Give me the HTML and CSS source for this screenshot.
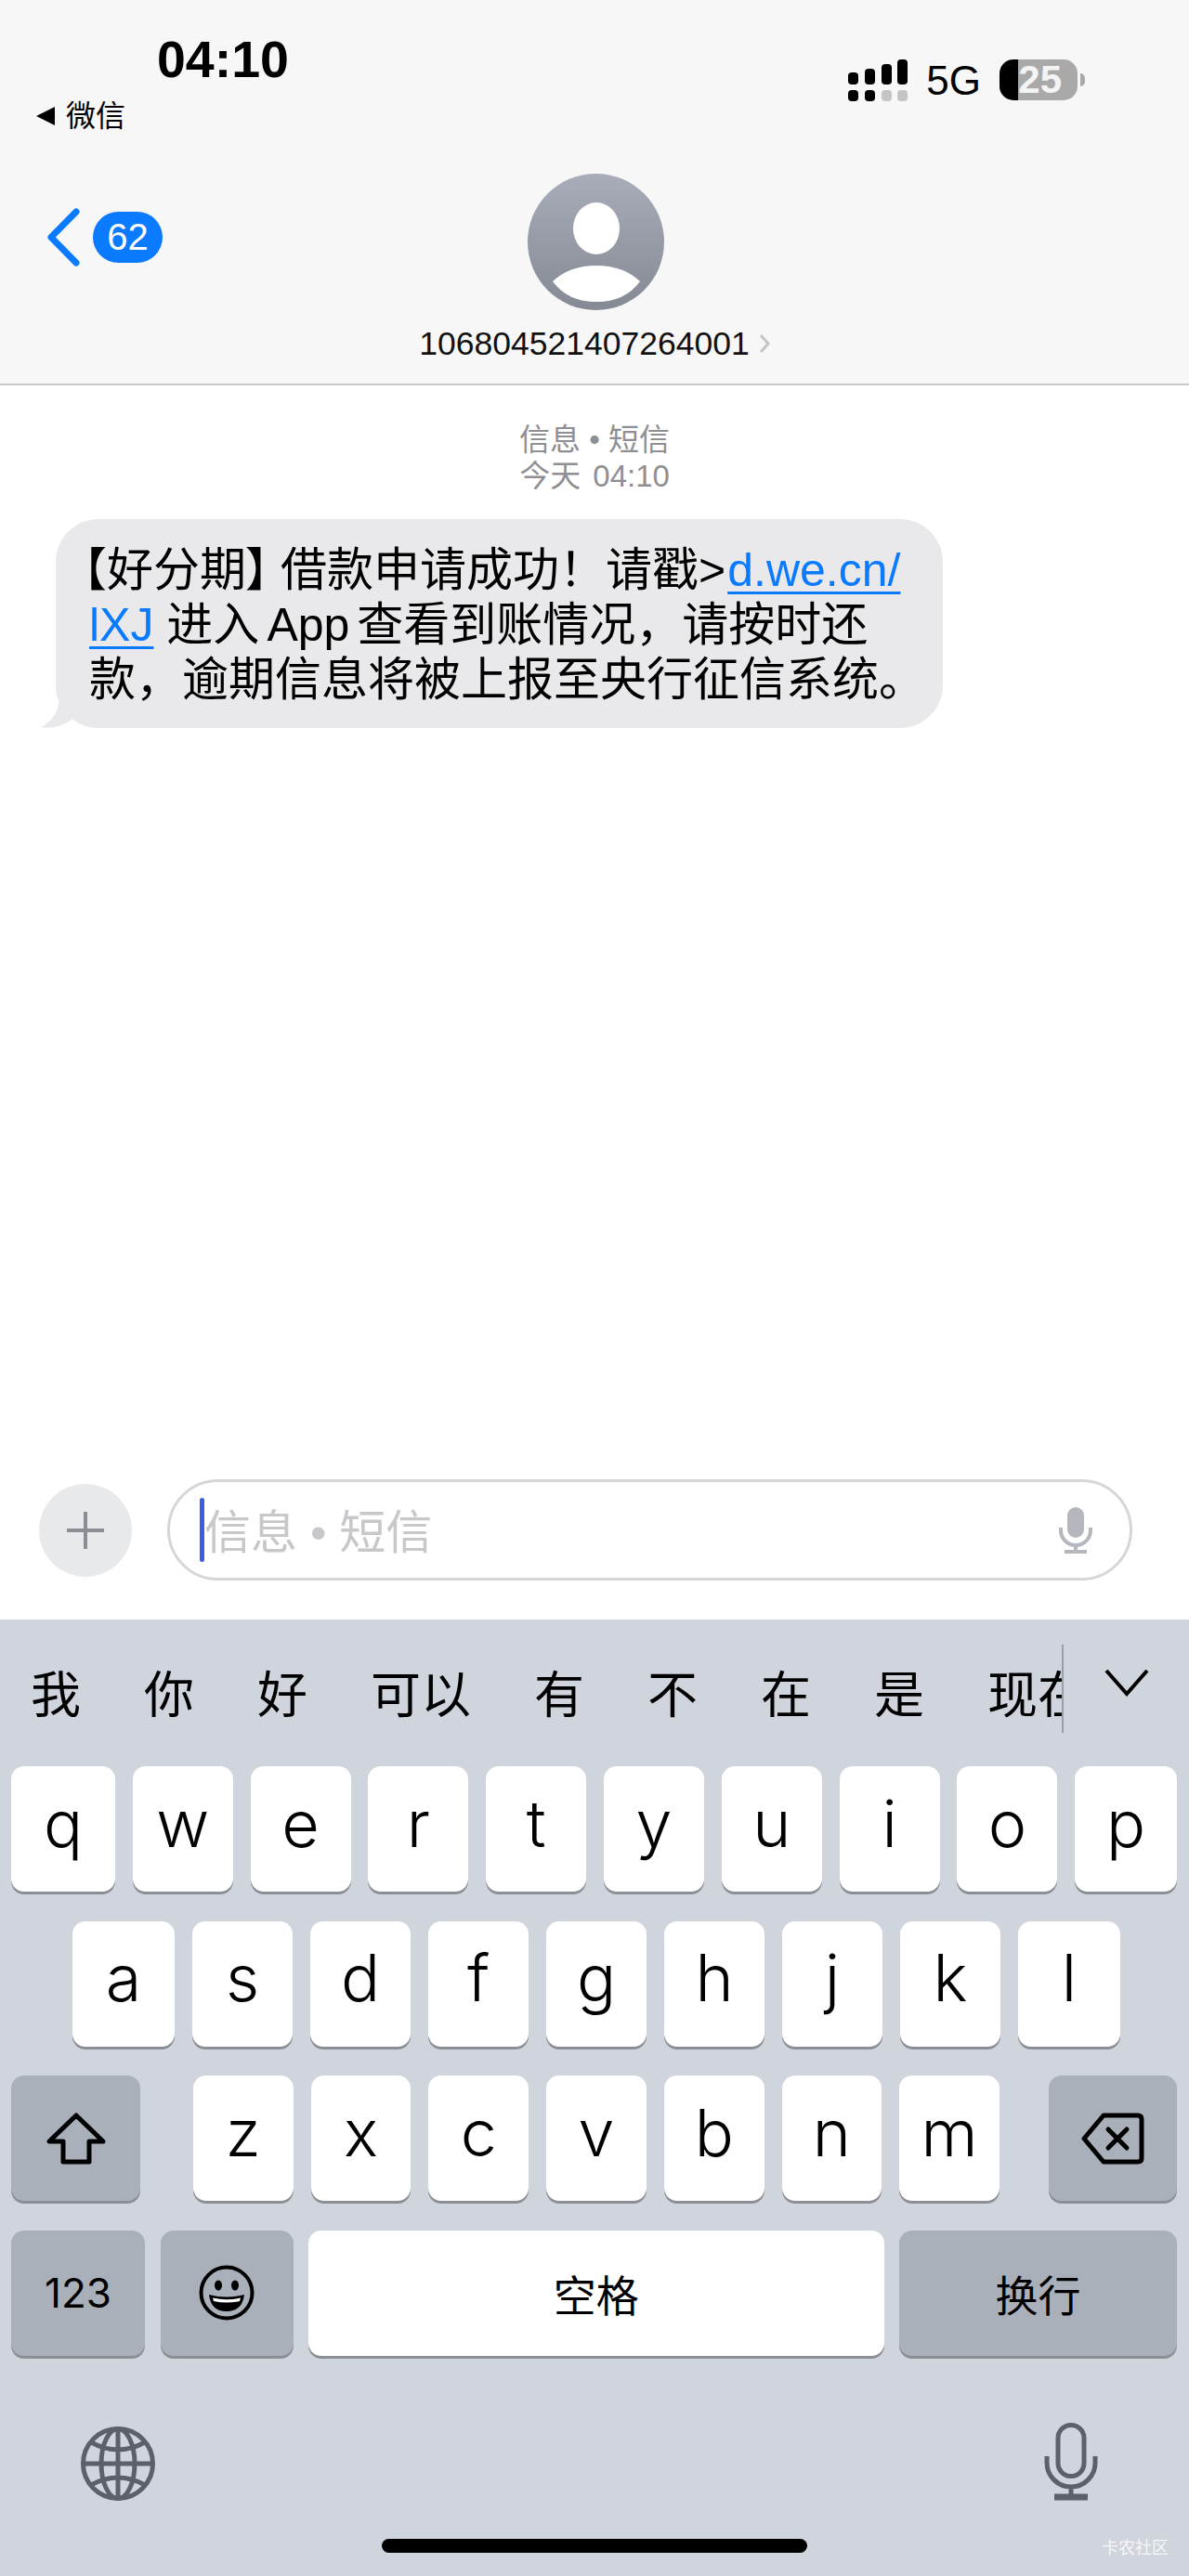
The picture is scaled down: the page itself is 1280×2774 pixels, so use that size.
FILE: index.html
```html
<!DOCTYPE html>
<html lang="zh-CN">
<head>
<meta charset="utf-8">
<title>信息</title>
<link rel="stylesheet" href="styles.css">
</head>
<body>
<div class="screen">
  <header class="header">
    <div class="status">
      <div class="status-left">
        <div class="time">04:10</div>
        <div class="return-app">
          <svg class="return-arrow" viewBox="0 0 21 20"><polygon points="21,0 21,20 1,10"/></svg>
          <span>微信</span>
        </div>
      </div>
      <div class="status-right">
        <svg class="signal" viewBox="0 0 64 45">
          <rect x="0" y="14" width="11" height="13" rx="4"/>
          <rect x="18" y="10" width="11" height="17" rx="4"/>
          <rect x="36" y="5" width="11" height="22" rx="4"/>
          <rect x="53" y="0" width="11" height="27" rx="4"/>
          <rect x="0" y="33" width="11" height="12" rx="4"/>
          <rect x="18" y="33" width="11" height="12" rx="4"/>
          <rect class="signal-off" x="36" y="33" width="11" height="12" rx="4"/>
          <rect class="signal-off" x="53" y="33" width="11" height="12" rx="4"/>
        </svg>
        <span class="network">5G</span>
        <div class="battery"><span>25</span></div>
      </div>
    </div>
    <nav class="nav">
      <div class="back">
        <svg class="back-chevron" viewBox="0 0 36 63"><path d="M32 4 L5 31.5 L32 59"/></svg>
        <span class="badge">62</span>
      </div>
      <div class="contact">
        <svg class="avatar" viewBox="0 0 147 147">
          <defs>
            <linearGradient id="avatarFill" x1="0" y1="0" x2="0" y2="1">
              <stop offset="0" stop-color="#a9adb9"/>
              <stop offset="1" stop-color="#858993"/>
            </linearGradient>
          </defs>
          <circle cx="73.5" cy="73.5" r="73.5" fill="url(#avatarFill)"/>
          <ellipse cx="74" cy="59" rx="25" ry="28" fill="#fff"/>
          <path d="M27 116 Q45 99 74 99 Q103 99 121 116 Q105 138 74 138 Q43 138 27 116 Z" fill="#fff"/>
        </svg>
        <div class="contact-name">
          <span>106804521407264001</span>
          <svg class="name-chevron" viewBox="0 0 12 20"><path d="M2 1 L10 10 L2 19"/></svg>
        </div>
      </div>
      <div></div>
    </nav>
  </header>

  <main class="messages">
    <div class="stamp">信息 • 短信<br><span class="stamp-time">今天 04:10</span></div>
    <div class="bubble">
      <svg class="bubble-tail" viewBox="0 0 36 34"><path d="M20 0 C20 14 12 28 0 33 C12 35 24 32 34 24 Z"/></svg>
      <p class="bubble-text">【好分期<span class="close-mark">】</span>借款申请成功！请戳&gt;<a href="#">d.we.cn/<br>lXJ</a> 进入<span class="latin-run">App</span>查看到账情况，请按时还<br>款，逾期信息将被上报至央行征信系统。</p>
    </div>
  </main>

  <section class="composer">
    <div class="plus">
      <svg viewBox="0 0 40 40"><path d="M20 1 V39 M1 20 H39"/></svg>
    </div>
    <div class="field">
      <span class="caret"></span>
      <span class="placeholder">信息 • 短信</span>
      <svg class="field-mic" viewBox="0 0 36 50">
        <rect x="9" y="0" width="18" height="33" rx="9" fill="#b4b7bd"/>
        <path d="M2 22 V25 A16 16 0 0 0 34 25 V22 M18 41 V47 M6 48 H30" fill="none" stroke="#b4b7bd" stroke-width="4"/>
      </svg>
    </div>
  </section>

  <section class="keyboard">
    <div class="candidates">
      <div class="candidate-list">
        <span>我</span><span>你</span><span>好</span><span>可以</span><span>有</span><span>不</span><span>在</span><span>是</span><span class="cut">现在</span>
      </div>
      <svg class="expand" viewBox="0 0 48 30"><path d="M2 2 L24 27 L46 2"/></svg>
    </div>
    <div class="rows">
      <div class="row row-top">
        <div class="key">q</div><div class="key">w</div><div class="key">e</div><div class="key">r</div><div class="key">t</div><div class="key">y</div><div class="key">u</div><div class="key">i</div><div class="key">o</div><div class="key">p</div>
      </div>
      <div class="row row-middle">
        <div class="key">a</div><div class="key">s</div><div class="key">d</div><div class="key">f</div><div class="key">g</div><div class="key">h</div><div class="key">j</div><div class="key">k</div><div class="key">l</div>
      </div>
      <div class="row row-shift">
        <div class="key key-dark">
          <svg class="glyph-shift" viewBox="0 0 66 56"><path d="M33 3 L4 31 H19 V53 H47 V31 H62 Z"/></svg>
        </div>
        <div class="letters">
          <div class="key">z</div><div class="key">x</div><div class="key">c</div><div class="key">v</div><div class="key">b</div><div class="key">n</div><div class="key">m</div>
        </div>
        <div class="key key-dark">
          <svg class="glyph-delete" viewBox="0 0 68 56"><path d="M3 28 L24 3 H61 Q65 3 65 7 V49 Q65 53 61 53 H24 Z"/><path d="M29 18 L49 38 M49 18 L29 38"/></svg>
        </div>
      </div>
      <div class="row row-bottom">
        <div class="key key-dark key-small">123</div>
        <div class="key key-dark">
          <svg class="glyph-emoji" viewBox="0 0 60 60">
            <circle cx="30" cy="30" r="27.5" fill="none" stroke="#000" stroke-width="4"/>
            <ellipse cx="21" cy="22" rx="4" ry="5.5"/>
            <ellipse cx="39" cy="22" rx="4" ry="5.5"/>
            <path d="M11 32 Q30 37 49 32 Q47 50 30 50 Q13 50 11 32 Z"/>
            <path d="M15 35.500 Q30 39 45 35.500 L44 39 Q30 42 16 39 Z" fill="#fff"/>
          </svg>
        </div>
        <div class="key key-word">空格</div>
        <div class="key key-dark key-word">换行</div>
      </div>
    </div>
    <div class="tools">
      <svg class="globe" viewBox="0 0 80 80">
        <circle cx="40" cy="40" r="37.500"/>
        <ellipse cx="40" cy="40" rx="18" ry="37.500"/>
        <path d="M40 3 V77 M3 40 H77 M11 17 Q40 33 69 17 M11 63 Q40 47 69 63"/>
      </svg>
      <svg class="dictation" viewBox="0 0 58 84">
        <rect x="15" y="2.500" width="28" height="55" rx="14"/>
        <path d="M3 36 V43 A26 26 0 0 0 55 43 V36 M29 69 V80"/>
        <path class="dictation-base" d="M11 80 H47"/>
      </svg>
    </div>
    <div class="home-bar"></div>
    <div class="watermark">卡农社区</div>
  </section>
</div>
</body>
</html>
```

FILE: styles.css
```css
* {
  box-sizing: border-box;
}

html,
body {
  margin: 0;
  padding: 0;
}

body {
  background: #fff;
  font-family: "Liberation Sans", "Noto Sans CJK SC", sans-serif;
  color: #000;
}

.screen {
  position: relative;
  display: flex;
  flex-direction: column;
  width: 1280px;
  height: 2774px;
  overflow: hidden;
}

/* Top bar */
.header {
  height: 415px;
  flex: none;
  background: #f7f7f7;
  border-bottom: 2px solid #c9c9cb;
}

.status {
  display: flex;
  justify-content: space-between;
  align-items: flex-start;
  height: 187px;
  padding: 35px 112px 0 38px;
}

.time {
  margin-left: 131px;
  font-size: 55.5px;
  line-height: 58px;
  font-weight: 700;
}

.return-app {
  display: flex;
  align-items: center;
  gap: 12px;
  margin-top: 12px;
  font-size: 32px;
  line-height: 40px;
}

.return-arrow {
  width: 21px;
  height: 20px;
}

.status-right {
  display: flex;
  align-items: center;
  gap: 20px;
  margin-top: 28px;
}

.signal {
  display: block;
  width: 64px;
  height: 45px;
}

.signal-off {
  fill: #c4c4c4;
}

.network {
  font-size: 44px;
  line-height: 45px;
  margin-top: 1px;
}

.battery {
  position: relative;
  width: 84px;
  height: 44px;
  margin-right: 8px;
  border-radius: 15px;
  background: linear-gradient(90deg, #000 24%, #a9a9a9 24%);
  color: #f4f4f4;
  font-size: 42px;
  line-height: 44px;
  font-weight: 700;
  text-align: right;
  padding-right: 17px;
}

.battery::after {
  content: "";
  position: absolute;
  left: 87px;
  top: 15px;
  width: 5px;
  height: 14px;
  border-radius: 0 7px 7px 0;
  background: #a9a9a9;
}

.nav {
  display: grid;
  grid-template-columns: 1fr auto 1fr;
}

.back {
  display: flex;
  align-items: center;
  gap: 14px;
  margin: 37px 0 0 50px;
  height: 63px;
}

.back-chevron {
  width: 36px;
  height: 63px;
  fill: none;
  stroke: #0a7aff;
  stroke-width: 7;
  stroke-linecap: round;
  stroke-linejoin: round;
}

.badge {
  width: 75px;
  height: 55px;
  border-radius: 28px;
  background: #0a7aff;
  color: #fff;
  font-size: 40px;
  line-height: 55px;
  text-align: center;
}

.contact {
  display: flex;
  flex-direction: column;
  align-items: center;
}

.avatar {
  display: block;
  width: 147px;
  height: 147px;
  margin-left: 4px;
}

.contact-name {
  display: flex;
  align-items: center;
  gap: 10px;
  margin-top: 16px;
  font-size: 35.5px;
  line-height: 40px;
  color: #111;
}

.name-chevron {
  width: 12px;
  height: 20px;
  fill: none;
  stroke: #c5c5c7;
  stroke-width: 3;
}

/* Conversation */
.messages {
  flex: 1;
  padding-top: 39px;
}

.stamp {
  font-size: 33px;
  line-height: 39px;
  text-align: center;
  color: #8e8e93;
}

.stamp-time {
  word-spacing: 4px;
}

.bubble {
  position: relative;
  width: 955px;
  height: 225px;
  margin: 27px 0 0 60px;
  padding: 26px 0 22px 36px;
  border-radius: 46px;
  background: #e9e9eb;
}

.bubble-tail {
  position: absolute;
  left: -16px;
  bottom: 0;
  width: 36px;
  height: 34px;
  fill: #e9e9eb;
}

.bubble-text {
  margin: 0;
  font-size: 50px;
  line-height: 59px;
  text-indent: -31px;
  white-space: nowrap;
}

/* Closing bracket set proportionally so it takes less than a full em */
.close-mark {
  font-feature-settings: "palt";
  margin-right: 12px;
}

.latin-run {
  margin: 0 8px;
}

.bubble-text a {
  margin-left: 2px;
  color: #0a7aff;
  text-decoration: underline;
  text-decoration-thickness: 3px;
  text-underline-offset: 6px;
}

/* Message input */
.composer {
  display: flex;
  align-items: center;
  gap: 38px;
  flex: none;
  padding: 0 61px 42px 42px;
}

.plus {
  display: flex;
  align-items: center;
  justify-content: center;
  width: 100px;
  height: 100px;
  flex: none;
  border-radius: 50%;
  background: #e8e9ea;
}

.plus svg {
  width: 40px;
  height: 40px;
  fill: none;
  stroke: #8a8e94;
  stroke-width: 4;
  stroke-linecap: round;
}

.field {
  position: relative;
  display: flex;
  align-items: center;
  justify-content: space-between;
  flex: 1;
  height: 109px;
  padding: 0 40px 0 37px;
  border: 3px solid #d6d6d8;
  border-radius: 55px;
}

.caret {
  position: absolute;
  left: 32px;
  top: 17px;
  width: 5px;
  height: 69px;
  border-radius: 3px;
  background: #3d5ce0;
}

.placeholder {
  margin-top: 6px;
  font-size: 50px;
  line-height: 60px;
  color: #c8c8cb;
}

.field-mic {
  width: 36px;
  height: 50px;
}

/* Keyboard */
.keyboard {
  position: relative;
  flex: none;
  display: flex;
  flex-direction: column;
  height: 1030px;
  background: #d0d4dc;
}

.candidates {
  display: flex;
  height: 158px;
  padding: 27px 0 0 33px;
}

.candidate-list {
  display: flex;
  align-items: center;
  gap: 68px;
  width: 1112px;
  height: 95px;
  padding-top: 16px;
  overflow: hidden;
  border-right: 2px solid #9a9ea6;
  font-size: 54px;
  line-height: 79px;
  white-space: nowrap;
}

.cut {
  flex: none;
}

.expand {
  width: 48px;
  height: 30px;
  margin: 26px 0 0 44px;
  fill: none;
  stroke: #000;
  stroke-width: 4;
}

.rows {
  display: flex;
  flex-direction: column;
  gap: 31.6px;
}

.row {
  height: 135px;
}

.row-top {
  display: grid;
  grid-template-columns: 112px repeat(8, 108px) 110px;
  column-gap: 18.8px;
  padding-left: 12px;
}

.row-middle {
  display: grid;
  grid-template-columns: 110px repeat(7, 108px) 110px;
  column-gap: 19px;
  padding-left: 78px;
}

.row-shift {
  display: grid;
  grid-template-columns: 139px 1fr 138px;
  padding: 0 13px 0 12px;
}

.letters {
  display: grid;
  grid-template-columns: repeat(7, 1fr);
  column-gap: 19px;
  margin: 0 53px 0 57px;
}

.row-bottom {
  display: grid;
  grid-template-columns: 144px 143px 1fr 299px;
  column-gap: 16.5px;
  padding: 0 13px 0 12px;
}

.key {
  display: flex;
  align-items: center;
  justify-content: center;
  height: 135px;
  padding-bottom: 12px;
  border-radius: 14px;
  background: #fff;
  box-shadow: 0 3px 0 #8b8e94;
  font-family: Inter, "Liberation Sans", "Noto Sans CJK SC", sans-serif;
  font-weight: 300;
  font-size: 70px;
  line-height: 80px;
}

.key-dark {
  background: #aab0ba;
  padding-bottom: 0;
}

.key-small {
  font-size: 44px;
  font-weight: 400;
}

.key-word {
  font-size: 46px;
  font-weight: 400;
  padding: 5px 0 0;
}

.glyph-shift,
.glyph-delete {
  fill: none;
  stroke: #000;
  stroke-width: 5;
  stroke-linejoin: round;
  stroke-linecap: round;
}

.glyph-shift {
  width: 66px;
  height: 56px;
}

.glyph-delete {
  width: 68px;
  height: 56px;
}

.glyph-emoji {
  width: 60px;
  height: 60px;
}

.tools {
  display: flex;
  align-items: flex-end;
  justify-content: space-between;
  height: 84px;
  margin-top: 72px;
  padding: 0 98px 0 87px;
}

.globe {
  width: 80px;
  height: 80px;
  fill: none;
  stroke: #5b6069;
  stroke-width: 5;
}

.dictation {
  width: 58px;
  height: 84px;
  fill: none;
  stroke: #5b6069;
  stroke-width: 5;
}

.dictation-base {
  stroke-width: 7;
}

.home-bar {
  align-self: center;
  width: 458px;
  height: 15px;
  margin-top: 41px;
  border-radius: 8px;
  background: #000;
}

.watermark {
  position: absolute;
  right: 22px;
  bottom: 20px;
  font-size: 18px;
  line-height: 20px;
  color: rgba(255, 255, 255, 0.85);
}
```
